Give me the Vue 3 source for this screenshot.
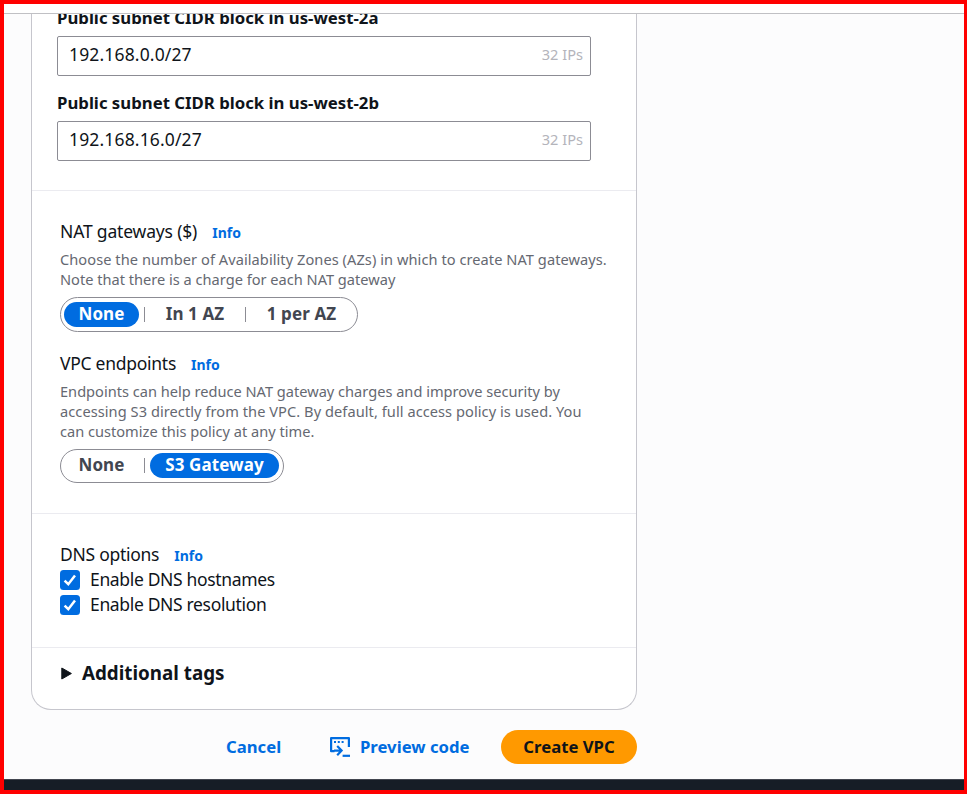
<script setup>
import { ref } from 'vue'

const subnets = [
  { zone: 'us-west-2a', cidr: '192.168.0.0/27' },
  { zone: 'us-west-2b', cidr: '192.168.16.0/27' },
]
const natOptions = ['None', 'In 1 AZ', '1 per AZ']
const nat = ref('None')
const endpointOptions = ['None', 'S3 Gateway']
const endpoint = ref('S3 Gateway')
const dnsOptions = ['Enable DNS hostnames', 'Enable DNS resolution']
</script>

<template>
  <div class="frame">
    <div class="topbar"></div>
    <main class="page">
      <div class="card">
        <section class="section subnets">
          <div v-for="s in subnets" :key="s.zone" class="field">
            <div class="label"><span>Public subnet CIDR block in {{ s.zone }}</span></div>
            <div class="input">
              <span class="value">{{ s.cidr }}</span>
              <span class="hint">32 IPs</span>
            </div>
          </div>
        </section>

        <section class="section network">
          <div class="heading"><span class="title nat-title">NAT gateways ($)</span><a class="info">Info</a></div>
          <p class="desc">
            <span class="wide">Choose the number of Availability Zones (AZs) in which to create NAT gateways.</span>
            <span>Note that there is a charge for each NAT gateway</span>
          </p>
          <div class="segmented nat">
            <template v-for="(o, i) in natOptions" :key="o">
              <i v-if="i" class="sep"></i>
              <button class="seg" :class="{ on: nat === o }" @click="nat = o">{{ o }}</button>
            </template>
          </div>
          <div class="heading second"><span class="title">VPC endpoints</span><a class="info">Info</a></div>
          <p class="desc">
            <span>Endpoints can help reduce NAT gateway charges and improve security by</span>
            <span class="wide">accessing S3 directly from the VPC. By default, full access policy is used. You</span>
            <span>can customize this policy at any time.</span>
          </p>
          <div class="segmented endpoints">
            <template v-for="(o, i) in endpointOptions" :key="o">
              <i v-if="i" class="sep"></i>
              <button class="seg" :class="{ on: endpoint === o }" @click="endpoint = o">{{ o }}</button>
            </template>
          </div>
        </section>

        <section class="section dns">
          <div class="heading"><span class="title">DNS options</span><a class="info">Info</a></div>
          <div v-for="o in dnsOptions" :key="o" class="check">
            <svg width="20" height="20" viewBox="0 0 20 20">
              <rect width="20" height="20" rx="3.5" fill="#006ce0" />
              <path d="M4.6 10.6 8.3 14.2 15 5.6" fill="none" stroke="#fff" stroke-width="2.5" />
            </svg>
            <span class="check-text">{{ o }}</span>
          </div>
        </section>

        <section class="tags">
          <svg width="12" height="13" viewBox="0 0 12 13">
            <path d="M1.8 1v11l9.6-5.5z" fill="#0f141a" stroke="#0f141a" stroke-width="1" stroke-linejoin="round" />
          </svg>
          <span>Additional tags</span>
        </section>
      </div>

      <div class="actions">
        <button class="link cancel">Cancel</button>
        <button class="link preview">
          <svg width="20" height="20" viewBox="0 0 20 20" fill="none" stroke="#006ce0" stroke-width="2.2">
            <path d="M4.5 14.2H1.1V1.1H18.9V10" stroke-linejoin="round" />
            <path d="M4 5h2M7.8 5h2M11.6 5h2" stroke-width="2" />
            <path d="M4 13.6h7M7.2 9l4.4 4.6-4.4 4.6" />
            <path d="M12.6 18.8H20" />
          </svg>
          <span>Preview code</span>
        </button>
        <button class="create"><span>Create VPC</span></button>
      </div>
    </main>
    <footer class="footer"></footer>
  </div>
</template>

<style>
body {
  margin: 0;
}
</style>

<style scoped>
.frame {
  box-sizing: border-box;
  width: 967px;
  height: 794px;
  border: 4px solid #f00;
  border-right-width: 3px;
  display: flex;
  flex-direction: column;
  overflow: hidden;
  font-family: "Noto Sans", "Open Sans", sans-serif;
  color: #0f141a;
  white-space: nowrap;
}
.topbar {
  height: 9px;
  background: #fff;
  border-bottom: 1px solid #c0c0c4;
}
.page {
  flex: 1;
  min-height: 0;
  overflow: hidden;
  background: #fcfcfd;
  padding-left: 27px;
}
.footer {
  height: 10px;
  background: #161d26;
  border-top: 1px solid #424650;
}
.card {
  box-sizing: border-box;
  width: 606px;
  height: 696px;
  background: #fff;
  border: 1px solid #c6c6cd;
  border-top: 0;
  border-radius: 0 0 20px 20px;
}
.section {
  box-sizing: border-box;
  border-bottom: 1px solid #ebebf0;
}
.subnets {
  display: flow-root;
  height: 177px;
  padding-left: 25px;
}
.field {
  width: 534px;
}
.field:first-child {
  margin-top: -7px;
}
.field + .field {
  margin-top: 16px;
}
.label {
  height: 22px;
  margin-bottom: 7px;
  font-size: 16.75px;
  line-height: 22px;
  font-weight: 700;
}
.input {
  box-sizing: border-box;
  height: 40px;
  border: 1px solid #8c8c94;
  border-radius: 2px;
  background: #fff;
  padding: 0 7px 4px 11px;
  display: flex;
  align-items: center;
  justify-content: space-between;
}
.value {
  font-size: 17.5px;
  line-height: 24px;
  letter-spacing: 0.15px;
}
.hint {
  font-size: 14.6px;
  line-height: 22px;
  color: #b4b4bb;
}
.network {
  height: 323px;
  padding: 29px 0 0 28px;
}
.heading {
  height: 24px;
  display: flex;
  gap: 15px;
}
.title {
  font-size: 17.5px;
  line-height: 22px;
  letter-spacing: -0.27px;
}
.nat-title {
  letter-spacing: -0.17px;
}
.info {
  font-size: 14px;
  font-weight: 700;
  color: #006ce0;
  line-height: 26px;
}
.desc {
  margin: 5px 0 8px;
  font-size: 14.6px;
  line-height: 20px;
  color: #656871;
}
.desc span {
  display: block;
}
.desc .wide {
  letter-spacing: 0.06px;
}
.segmented {
  box-sizing: border-box;
  height: 35px;
  border: 1px solid #8c8c94;
  border-radius: 18px;
  padding: 0 3px;
  display: flex;
  align-items: center;
}
.nat {
  width: 298px;
}
.endpoints {
  width: 224px;
  height: 34px;
  padding-bottom: 1px;
}
.seg {
  border: 0;
  padding: 0 0 1px;
  height: 25px;
  border-radius: 13px;
  background: transparent;
  color: #424650;
  font: 700 17px/24px "Noto Sans", sans-serif;
  letter-spacing: 0.1px;
  width: 75px;
  flex: none;
}
.nat .seg:nth-of-type(2) {
  width: 90px;
}
.nat .seg:nth-of-type(3) {
  width: 101px;
}
.endpoints .seg:nth-of-type(2) {
  width: 129px;
}
.seg.on {
  background: #006ce0;
  color: #fff;
}
.sep {
  width: 1px;
  height: 15px;
  margin: 0 5px;
  background: #8c8c94;
  flex: none;
}
.second {
  margin-top: 20px;
}
.dns {
  height: 134px;
  padding: 29px 0 0 28px;
}
.dns .heading {
  margin-bottom: 3px;
}
.check {
  display: flex;
  align-items: center;
  gap: 10px;
  height: 20px;
  margin-bottom: 5px;
}
.check svg {
  flex: none;
}
.check-text {
  font-size: 17.5px;
  line-height: 22px;
  letter-spacing: -0.34px;
  padding-bottom: 2px;
}
.tags {
  display: flex;
  align-items: center;
  height: 50px;
  padding-left: 28px;
  gap: 10px;
  font-size: 18.8px;
  font-weight: 700;
}
.actions {
  display: flex;
  align-items: center;
  justify-content: flex-end;
  width: 606px;
  height: 34px;
  margin-top: 20px;
}
.link,
.create {
  border: 0;
  padding: 0;
  font: 700 16.7px/24px "Noto Sans", sans-serif;
}
.link {
  background: transparent;
  color: #006ce0;
}
.cancel {
  width: 55px;
  margin-right: 49px;
}
.preview {
  display: flex;
  align-items: center;
  gap: 10px;
  width: 140px;
  margin-right: 31px;
}
.preview svg {
  flex: none;
}
.create {
  width: 136px;
  height: 34px;
  border-radius: 17px;
  background: #f90;
  color: #0f141a;
}
</style>
